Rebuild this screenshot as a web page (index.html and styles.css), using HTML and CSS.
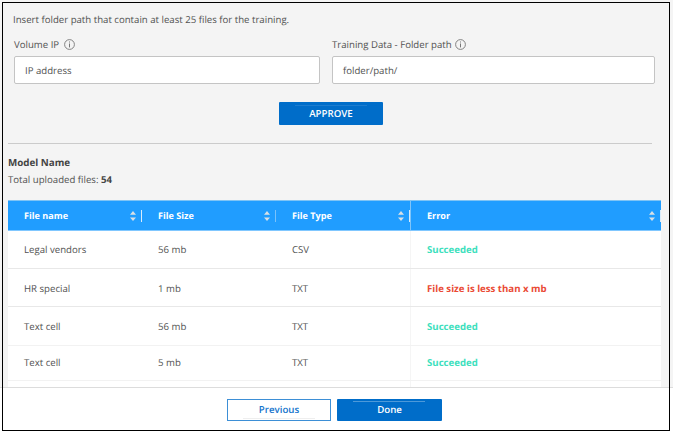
FILE: index.html
```
<!DOCTYPE html>
<html lang="en">
<head>
<meta charset="utf-8">
<title>Training data</title>
<link rel="stylesheet" href="styles.css">
</head>
<body>
<svg class="defs" width="0" height="0">
  <symbol id="info" viewBox="0 0 11 11"><circle cx="5.5" cy="5.5" r="4.9" fill="none" stroke="currentColor" stroke-width=".9"/><path d="M5.5 4.5v3.9M5.5 2.5v1" stroke="currentColor" stroke-width="1" fill="none"/></symbol>
  <symbol id="sort" viewBox="0 0 6 10"><path d="M3 0L6 3.7H0zM3 10L0 6.5h6z" fill="currentColor"/></symbol>
</svg>
<div class="page">
  <main class="content">
    <p class="intro">Insert folder path that contain at least 25 files for the training.</p>
    <form class="fields">
      <div class="field field-ip">
        <label class="label">Volume IP <svg class="info info-ip"><use href="#info"/></svg></label>
        <div class="input">IP address</div>
      </div>
      <div class="field field-path">
        <label class="label">Training Data - Folder path <svg class="info"><use href="#info"/></svg></label>
        <div class="input">folder/path/</div>
      </div>
    </form>
    <button class="btn primary approve">APPROVE</button>
    <hr class="divider">
    <h2 class="model">Model Name</h2>
    <p class="total">Total uploaded files: <b>54</b></p>
    <div class="table">
      <div class="row head">
        <div class="cell"><span>File name</span><svg class="sort"><use href="#sort"/></svg><i class="grip"></i></div>
        <div class="cell"><span>File Size</span><svg class="sort"><use href="#sort"/></svg><i class="grip faint"></i></div>
        <div class="cell type"><span>File Type</span><svg class="sort"><use href="#sort"/></svg><i class="grip"></i></div>
        <div class="cell"><span>Error</span><svg class="sort"><use href="#sort"/></svg><i class="grip"></i></div>
      </div>
      <div class="row"><div class="cell">Legal vendors</div><div class="cell">56 mb</div><div class="cell">CSV</div><div class="cell ok">Succeeded</div></div>
      <div class="row"><div class="cell">HR special</div><div class="cell">1 mb</div><div class="cell">TXT</div><div class="cell bad">File size is less than x mb</div></div>
      <div class="row"><div class="cell">Text cell</div><div class="cell">56 mb</div><div class="cell">TXT</div><div class="cell ok">Succeeded</div></div>
      <div class="row"><div class="cell">Text cell</div><div class="cell">5 mb</div><div class="cell">TXT</div><div class="cell ok">Succeeded</div></div>
      <div class="row"><div class="cell"></div><div class="cell"></div><div class="cell"></div><div class="cell"></div></div>
    </div>
  </main>
  <footer class="footer">
    <button class="btn secondary">Previous</button>
    <button class="btn primary">Done</button>
  </footer>
  <div class="frame"></div>
</div>
</body>
</html>
```
FILE: styles.css
```
* { box-sizing: border-box; margin: 0; }
body { font: 9.63px/14px "Open Sans", sans-serif; text-rendering: geometricPrecision; color: #525252; background: #fff; overflow: hidden; }
.defs { position: absolute; }
.page { position: relative; width: 673px; height: 434px; display: flex; flex-direction: column; }
.content { height: 387px; background: #f4f4f4; padding: 13px 12px 0 8px; overflow: hidden; }
.intro { padding-left: 5px; }
.fields { display: flex; gap: 12px; margin: 10px 0 0 6px; }
.field-ip { width: 306px; }
.field-path { width: 323px; }
.label { display: flex; align-items: center; gap: 4px; height: 15px; margin-bottom: 4px; }
.info { width: 11px; height: 11px; color: #777; margin-left: -1px; }
.info-ip { margin-left: 1px; }
.input { height: 28px; padding: 0 10px; line-height: 27px; background: #fff; border: 1px solid #c4c4c4; border-radius: 2px; }
.btn { position: relative; display: block; width: 104px; height: 22px; padding: 0; border: 0; border-radius: 1px; font: 600 9.7px/22px "Open Sans", sans-serif; text-align: center; text-rendering: geometricPrecision; }
.primary { background: #006dc9; color: #fff; width: 105px; }
.primary::before { content: ""; position: absolute; top: 2px; left: 16px; width: 72px; height: 1px; background: #4d99d9; }
.secondary { background: #fff; color: #1474cc; border: 1px solid #3d8fd6; line-height: 20px; border-radius: 0; }
.secondary::after { content: ""; position: absolute; bottom: 1px; left: 15px; width: 72px; height: 1px; background: #eee; }
.approve { margin: 18px 0 0 271px; width: 104px; height: 23px; }
.approve::before { background: #1c7ccf; top: 3px; }
.divider { width: 644px; height: 1px; margin-top: 18px; border: 0; background: #cbcbcb; }
.model { margin-top: 12px; font-size: 9.8px; line-height: 14px; font-weight: 700; color: #444; }
.total { margin-top: 3px; }
.total b { color: #444; }
.table { width: 653px; margin-top: 13px; background: #fff; }
.row { display: grid; grid-template-columns: 134px 134px 135px 251px; height: 38px; border-bottom: 1px solid #e8e8e8; }
.row:nth-child(3) .cell { padding-top: 2px; }
.row:nth-child(4) { height: 39px; border-color: #f2f2f2; }
.row:nth-child(4) .cell { padding-top: 1px; }
.row:nth-child(5) { height: 35px; border-color: #f2f2f2; }
.row:nth-child(5) .cell { padding-bottom: 1px; }
.cell { display: flex; align-items: center; padding-left: 16px; }
.cell:nth-child(4) { border-left: 1px solid #f5f5f5; margin-left: -1px; margin-right: 1px; }
.head { height: 31px; background: #209dff; color: #fff; font-weight: 700; font-size: 9.1px; border-top: 1px solid #80c4f5; border-bottom: 1px solid #80c7ff; }
.head span { padding-top: 1px; }
.head .cell:nth-child(4) { border-color: #80c4f8; }
.head .type { padding-right: 1px; }
.sort { width: 6px; height: 10px; margin-left: auto; margin-right: 5px; color: #d9e0e5; }
.grip { width: 1px; height: 12px; background: #d8ecfb; }
.faint { background: #79c2fb; }
.ok { color: #3de0bd; font-weight: 700; }
.bad { color: #ea4a35; font-weight: 700; }
.footer { height: 47px; border-top: 1px solid #dcdcdc; display: flex; gap: 6px; padding: 11px 0 0 227px; background: #fff; }
.frame { position: absolute; left: 2px; top: 2px; width: 668px; height: 429px; border: 1px solid #000; pointer-events: none; }
```
